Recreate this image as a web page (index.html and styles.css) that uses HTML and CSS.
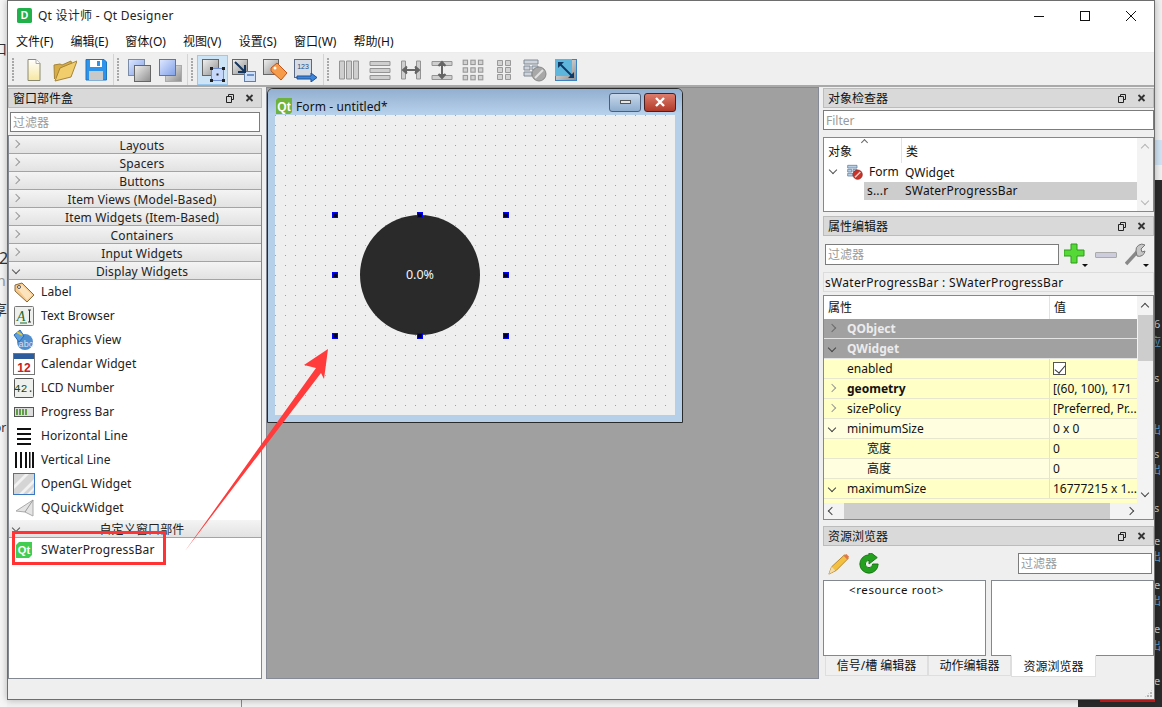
FILE: index.html
```html
<!DOCTYPE html>
<html lang="zh">
<head>
<meta charset="utf-8">
<title>Qt 设计师 - Qt Designer</title>
<link rel="stylesheet" href="styles.css">
</head>
<body>
<svg class="defs" width="0" height="0" aria-hidden="true">
  <defs>
    <linearGradient id="g" x1="0" y1="0" x2="1" y2="1"><stop offset="0" stop-color="#f2f2f2"/><stop offset="1" stop-color="#8d8d8d"/></linearGradient>
    <linearGradient id="b" x1="0" y1="0" x2="1" y2="1"><stop offset="0" stop-color="#dfe9ff"/><stop offset="1" stop-color="#7f9fe6"/></linearGradient>
    <linearGradient id="y" x1="0" y1="0" x2="0" y2="1"><stop offset="0" stop-color="#fff"/><stop offset="1" stop-color="#f6e7a0"/></linearGradient>
    <symbol id="qt" viewBox="0 0 16 16"><path d="M3 0h13v13l-3 3H0V3z" fill="#41cd52"/><text x="8" y="12" text-anchor="middle" font-family="Liberation Sans" font-size="11" font-weight="700" fill="#fff">Qt</text></symbol>
    <symbol id="qt2" viewBox="0 0 16 16"><path d="M2 0h14v14l-2 2H0V2z" fill="#6fb33e"/><text x="8" y="13" text-anchor="middle" font-family="Liberation Sans" font-size="12" font-weight="700" fill="#fff">Qt</text></symbol>
    <symbol id="dockbtns" viewBox="0 0 32 12"><path d="M2.500 4.500h5v6h-5zM4.500 4.500v-2h5v5h-2" fill="none" stroke="#222"/><path d="M22.500 3l6 6m0-6l-6 6" stroke="#333" stroke-width="1.800"/></symbol>
    <symbol id="grid3" viewBox="0 0 20 20"><g fill="#d2d2d2" stroke="#999"><rect x="1" y="1" width="4" height="4"/><rect x="8" y="1" width="4" height="4"/><rect x="15" y="1" width="4" height="4"/><rect x="1" y="8" width="4" height="4"/><rect x="8" y="8" width="4" height="4"/><rect x="15" y="8" width="4" height="4"/><rect x="1" y="15" width="4" height="4"/><rect x="8" y="15" width="4" height="4"/><rect x="15" y="15" width="4" height="4"/></g></symbol>
    <symbol id="formicon" viewBox="0 0 24 24"><path d="M1 2h14v4H1zM1 8h6v4H1zM9 8h6v4H9zM1 14h8v4H1z" fill="#cfd4da" stroke="#7f8a96"/><circle cx="16" cy="16" r="7" fill="#a8a8a8" stroke="#888"/><path d="M12 20l8-8" stroke="#e2e2e2" stroke-width="2"/></symbol>
    <symbol id="formicon-red" viewBox="0 0 24 24"><path d="M1 2h14v4H1zM1 8h6v4H1zM9 8h6v4H9zM1 14h8v4H1z" fill="#b9cfe6" stroke="#4d7199"/><circle cx="16" cy="16" r="7" fill="#c8352b" stroke="#8f1d15"/><path d="M12 20l8-8" stroke="#f2d6d2" stroke-width="2"/></symbol>
  </defs>
</svg>

<div class="desktop">
  <div class="sliver-left">
    <span class="scrap s-a">口</span>
    <span class="scrap s-b">2</span>
    <span class="scrap s-c">n</span>
    <span class="scrap s-d">享</span>
    <span class="scrap s-e">or</span>
  </div>

  <div class="center-col">
    <div class="window">
      <header class="titlebar">
        <svg class="app-logo" viewBox="0 0 16 16"><rect width="16" height="16" rx="2" fill="#21b14a"/><text x="8" y="12" text-anchor="middle" font-family="Liberation Sans" font-size="11" font-weight="700" fill="#fff">D</text></svg>
        <span class="app-title">Qt 设计师 - Qt Designer</span>
        <div class="winbtns">
          <svg class="winbtn" viewBox="0 0 46 30"><path d="M18 15.500h10" stroke="#111"/></svg>
          <svg class="winbtn" viewBox="0 0 46 30"><rect x="18.500" y="10.500" width="9" height="9" fill="none" stroke="#111"/></svg>
          <svg class="winbtn" viewBox="0 0 46 30"><path d="M18 10l10 10m0-10L18 20" stroke="#111"/></svg>
        </div>
      </header>

      <nav class="menubar">
        <span class="menu">文件(F)</span><span class="menu">编辑(E)</span><span class="menu">窗体(O)</span><span class="menu">视图(V)</span><span class="menu">设置(S)</span><span class="menu">窗口(W)</span><span class="menu">帮助(H)</span>
      </nav>

      <div class="toolbar">
        <div class="tgroup first">
          <i class="grip"></i>
          <span class="tbtn"><svg viewBox="0 0 24 24"><path d="M6 1.500h8l4 4v17H6z" fill="url(#y)" stroke="#8a8a70"/><path d="M14 1.500v4h4" fill="#fff" stroke="#aaa"/></svg></span>
          <span class="tbtn"><svg viewBox="0 0 24 24"><path d="M1.500 21L1 7l6-1 2 1 9-4 1 5" fill="#d9ad45" stroke="#a5843a"/><path d="M2 23L7 10 24 3 18 19z" fill="#f1cd6b" stroke="#a5843a"/></svg></span>
          <span class="tbtn"><svg viewBox="0 0 24 24"><path d="M2 1.500h18l2.500 2.500v18H2z" fill="#2e93ea" stroke="#1d74c2"/><rect x="6" y="2" width="12" height="7" fill="#fff"/><rect x="13" y="3" width="3" height="5" fill="#2e93ea"/><rect x="5" y="13" width="14" height="9" fill="#c9c9c9"/></svg></span>
        </div>
        <div class="tgroup">
          <i class="grip"></i>
          <span class="tbtn"><svg viewBox="0 0 24 24"><rect x="1.500" y="1.500" width="16" height="16" fill="url(#b)" stroke="#7a8ca8"/><rect x="7.500" y="7.500" width="16" height="16" fill="url(#g)" stroke="#666"/></svg></span>
          <span class="tbtn"><svg viewBox="0 0 24 24"><rect x="7.500" y="7.500" width="16" height="16" fill="url(#g)" stroke="#aaa"/><rect x="1.500" y="1.500" width="16" height="16" fill="url(#b)" stroke="#5f75a5"/></svg></span>
        </div>
        <div class="tgroup">
          <i class="grip"></i>
          <span class="tbtn active"><svg viewBox="0 0 24 24"><rect x="1.500" y="1.500" width="16" height="16" fill="url(#g)" stroke="#666"/><rect x="10.500" y="10.500" width="12" height="12" fill="#c6d8fb" stroke="#6f8fd0"/><g fill="#222"><rect x="9" y="9" width="3" height="3"/><rect x="21" y="9" width="3" height="3"/><rect x="9" y="21" width="3" height="3"/><rect x="21" y="21" width="3" height="3"/><rect x="15.500" y="15.500" width="2" height="2"/></g></svg></span>
          <span class="tbtn"><svg viewBox="0 0 24 24"><rect x="0.500" y="1.500" width="15" height="15" fill="url(#g)" stroke="#666"/><rect x="12.500" y="13.500" width="11" height="10" fill="#cfe0f7" stroke="#5f7faa"/><rect x="15" y="16" width="7" height="2" fill="#6f93c9"/><path d="M3 4l10 10m-7 0h7V7" fill="none" stroke="#14365e" stroke-width="2"/></svg></span>
          <span class="tbtn"><svg viewBox="0 0 24 24"><rect x="0.500" y="1.500" width="15" height="15" fill="url(#g)" stroke="#666"/><path d="M8 10l6-5 10 10-6 7-10-9z" fill="#f59b4a" stroke="#c0561c"/><circle cx="12" cy="10" r="1.500" fill="#fff"/></svg></span>
          <span class="tbtn"><svg viewBox="0 0 24 24"><rect x="0.500" y="1.500" width="17" height="18" fill="#d6dbe4" stroke="#5a6a86"/><text x="9" y="11" text-anchor="middle" font-family="Liberation Sans" font-size="7" fill="#274a86">123</text><path d="M3 18h14v-3l6 4.500-6 4.500v-3H3z" fill="#3c86dc" stroke="#1e4f95"/></svg></span>
        </div>
        <div class="tgroup">
          <i class="grip"></i>
          <span class="tbtn"><svg viewBox="0 0 24 24"><path d="M2.500 3h5v18h-5zM9.500 3h5v18h-5zM16.500 3h5v18h-5z" fill="#cfcfcf" stroke="#949494"/></svg></span>
          <span class="tbtn"><svg viewBox="0 0 24 24"><path d="M2 3.500h20v4H2zM2 10.500h20v4H2zM2 17.500h20v4H2z" fill="#cfcfcf" stroke="#949494"/></svg></span>
          <span class="tbtn"><svg viewBox="0 0 24 24"><path d="M2.500 3h4v18h-4zM17.500 3h4v18h-4z" fill="#cfcfcf" stroke="#949494"/><path d="M4 12h16M8 8.500L4 12l4 3.500M16 8.500l4 3.500-4 3.500" fill="#666" stroke="#666" stroke-width="2"/></svg></span>
          <span class="tbtn"><svg viewBox="0 0 24 24"><path d="M2 3.500h20v4H2zM2 17.500h20v4H2z" fill="#cfcfcf" stroke="#949494"/><path d="M12 5v15M8.500 8L12 4l3.500 4M8.500 16l3.500 4 3.500-4" fill="#666" stroke="#666" stroke-width="2"/></svg></span>
          <span class="tbtn"><svg viewBox="-1 -1 22 22"><use href="#grid3" width="20" height="20"/></svg></span>
          <span class="tbtn"><svg viewBox="0 0 24 24"><path d="M5.500 2.500h5v5h-5zM13.500 2.500h5v5h-5zM5.500 9.500h5v5h-5zM13.500 9.500h5v5h-5zM5.500 16.500h5v5h-5zM13.500 16.500h5v5h-5z" fill="#d2d2d2" stroke="#999"/></svg></span>
          <span class="tbtn"><svg viewBox="0 0 24 24"><use href="#formicon" width="24" height="24"/></svg></span>
          <span class="tbtn"><svg viewBox="0 0 24 24"><rect x="1.500" y="1.500" width="21" height="21" fill="url(#g)" stroke="#3b82c4"/><path d="M1 1h17v17H1z" fill="#5fb6dc"/><path d="M5 5l14 14" stroke="#0f3b66" stroke-width="2"/><path d="M4 10V4h6zM20 14v6h-6z" fill="#0f3b66"/></svg></span>
        </div>
      </div>

      <main class="workspace">
        <section class="dock left-dock">
          <div class="dock-title"><span>窗口部件盒</span><svg class="dock-btns" viewBox="0 0 32 12"><use href="#dockbtns"/></svg></div>
          <input class="filter left-filter" placeholder="过滤器">
          <div class="toolbox">
            <div class="cat"><i class="chev right"></i>Layouts</div>
            <div class="cat"><i class="chev right"></i>Spacers</div>
            <div class="cat"><i class="chev right"></i>Buttons</div>
            <div class="cat"><i class="chev right"></i>Item Views (Model-Based)</div>
            <div class="cat"><i class="chev right"></i>Item Widgets (Item-Based)</div>
            <div class="cat"><i class="chev right"></i>Containers</div>
            <div class="cat"><i class="chev right"></i>Input Widgets</div>
            <div class="cat"><i class="chev down"></i>Display Widgets</div>
            <div class="item">
              <svg viewBox="0 0 22 22"><path d="M2 4l7-2 12 12-7 7L2 10z" fill="#f7c98b" stroke="#8a6a3c"/><path d="M4 7l5-3 10 10-5 5z" fill="#fbe3bd"/><circle cx="6" cy="6" r="1.500" fill="#fff" stroke="#555"/></svg>Label</div>
            <div class="item">
              <svg viewBox="0 0 22 22"><rect x="1.500" y="1.500" width="19" height="19" rx="1" fill="#eef0ee" stroke="#777"/><text x="8" y="16" text-anchor="middle" font-family="Liberation Serif" font-size="14" font-style="italic" fill="#1d6d2e">A</text><path d="M7 18h7" stroke="#1d6d2e"/><path d="M15 5h3M15 17h3M16.500 5v12" stroke="#333"/></svg>Text Browser</div>
            <div class="item">
              <svg viewBox="0 0 22 22"><circle cx="12" cy="13" r="8" fill="#4f8fd0"/><path d="M1 6l6-5 4 6-5 6z" fill="#5ea0df" stroke="#2a6bb0"/><path d="M4 3l5 3" stroke="#e8c52a" stroke-width="2"/><text x="13" y="18" text-anchor="middle" font-family="Liberation Sans" font-size="9" fill="#dde">abc</text></svg>Graphics View</div>
            <div class="item">
              <svg viewBox="0 0 22 22"><rect x="0.500" y="0.500" width="21" height="21" fill="#fff" stroke="#777"/><rect x="1" y="1" width="20" height="5" fill="#2c5c9c"/><text x="11" y="18.500" text-anchor="middle" font-family="Liberation Sans" font-size="12" font-weight="700" fill="#c62222">12</text></svg>Calendar Widget</div>
            <div class="item">
              <svg viewBox="0 0 22 22"><rect x="1.500" y="1.500" width="19" height="19" rx="1" fill="#eef0ee" stroke="#555"/><text x="11" y="15" text-anchor="middle" font-family="Liberation Mono" font-size="11" fill="#0c4a18">42.</text></svg>LCD Number</div>
            <div class="item">
              <svg viewBox="0 0 22 22"><rect x="1.500" y="6.500" width="19" height="9" fill="#ddd" stroke="#555"/><path d="M3 8h2v6H3zM6 8h2v6H6zM9 8h2v6H9zM12 8h2v6h-2z" fill="#5f9e45"/></svg>Progress Bar</div>
            <div class="item">
              <svg viewBox="0 0 22 22"><path d="M4 3h14v2H4zM4 8h14v2H4zM4 13h14v2H4zM4 18h14v2H4z" fill="#111"/></svg>Horizontal Line</div>
            <div class="item">
              <svg viewBox="0 0 22 22"><path d="M2 3h2v16H2zM7 3h2v16H7zM12 3h2v16h-2zM16 3h1.500v16H16zM19 3h2v16h-2z" fill="#111"/></svg>Vertical Line</div>
            <div class="item">
              <svg viewBox="0 0 22 22"><rect x="0.500" y="0.500" width="21" height="21" fill="#d5d5d5" stroke="#3a78c4"/><path d="M1 12L12 1h4L1 16zM6 21L21 6v4L10 21zM14 21l7-7v3l-4 4z" fill="#f2f2f2"/></svg>OpenGL Widget</div>
            <div class="item">
              <svg viewBox="0 0 22 22"><path d="M3 14L20 3v16l-8-4z" fill="#e4e4e4" stroke="#aaa"/><path d="M12 15L20 3" stroke="#999"/></svg>QQuickWidget</div>
            <div class="cat"><i class="chev down"></i>自定义窗口部件</div>
            <div class="item custom"><svg viewBox="0 0 16 16"><use href="#qt"/></svg>SWaterProgressBar</div>
          </div>
        </section>

        <section class="central">
          <div class="subwindow">
            <div class="sub-title">
              <svg class="sub-logo" viewBox="0 0 16 16"><use href="#qt2"/></svg>
              <span class="sub-text">Form - untitled*</span>
              <span class="sub-min"><i></i></span>
              <span class="sub-close"><svg viewBox="0 0 12 10"><path d="M2 1l8 8m0-8L2 9" stroke="#fff" stroke-width="2.400"/></svg></span>
            </div>
            <div class="canvas">
              <div class="water">0.0%</div>
              <i class="handle hx0 hy0"></i><i class="handle hx1 hy0"></i><i class="handle hx2 hy0"></i>
              <i class="handle hx0 hy1"></i><i class="handle hx2 hy1"></i>
              <i class="handle hx0 hy2"></i><i class="handle hx1 hy2"></i><i class="handle hx2 hy2"></i>
            </div>
          </div>
        </section>

        <section class="dock right-dock">
          <div class="dock-title"><span>对象检查器</span><svg class="dock-btns" viewBox="0 0 32 12"><use href="#dockbtns"/></svg></div>
          <input class="filter r-filter" placeholder="Filter">
          <div class="tree">
            <div class="tree-main">
              <div class="tree-head"><span class="th1">对象<i class="sort"></i></span><span class="th2">类</span></div>
              <div class="tree-row">
                <i class="chev down t-chev"></i>
                <svg class="t-icon" viewBox="0 0 24 24"><use href="#formicon-red"/></svg>
                <span class="t-name">Form</span><span>QWidget</span>
              </div>
              <div class="tree-row sel"><span class="t-sel-name">s...r</span><span>SWaterProgressBar</span></div>
            </div>
            <div class="vbar short"><i class="chev up"></i><i class="chev down"></i></div>
          </div>

          <div class="dock-title t2"><span>属性编辑器</span><svg class="dock-btns" viewBox="0 0 32 12"><use href="#dockbtns"/></svg></div>
          <div class="prop-tools">
            <input class="filter p-filter" placeholder="过滤器">
            <svg class="pt-plus" viewBox="0 0 24 24"><path d="M7 1h6v6h7v6h-7v7H7v-7H0V7h7z" fill="#54d936" stroke="#2f9a1a"/><path d="M18 21h6l-3 3z" fill="#111"/></svg>
            <i class="pt-minus"></i>
            <svg class="pt-wrench" viewBox="0 0 24 24"><path d="M1 21L13 8" stroke="#888" stroke-width="3.500"/><path d="M11 8a6 6 0 0 1 9-6l-4 4 1 3 3-1a6 6 0 0 1-8 5z" fill="#c7c7c7" stroke="#777"/><path d="M18 21h6l-3 3z" fill="#111"/></svg>
          </div>
          <div class="obj-label">sWaterProgressBar : SWaterProgressBar</div>

          <div class="ptable">
            <div class="ptable-top">
              <div class="pcols">
                <div class="phead"><span class="pn">属性</span><span class="pv">值</span></div>
                <div class="grp"><i class="chev right"></i>QObject</div>
                <div class="grp"><i class="chev down dark"></i>QWidget</div>
                <div class="prow"><span class="pn">enabled</span><span class="pv"><i class="check"></i></span></div>
                <div class="prow"><span class="pn strong"><i class="chev right"></i>geometry</span><span class="pv">[(60, 100), 171</span></div>
                <div class="prow"><span class="pn"><i class="chev right"></i>sizePolicy</span><span class="pv">[Preferred, Pr...</span></div>
                <div class="prow lite"><span class="pn"><i class="chev down dark"></i>minimumSize</span><span class="pv">0 x 0</span></div>
                <div class="prow"><span class="pn sub">宽度</span><span class="pv">0</span></div>
                <div class="prow lite"><span class="pn sub">高度</span><span class="pv">0</span></div>
                <div class="prow"><span class="pn"><i class="chev down dark"></i>maximumSize</span><span class="pv">16777215 x 1...</span></div>
                <div class="prow clip"></div>
              </div>
              <div class="vbar long"><i class="chev up"></i><b class="vthumb"></b><i class="chev down"></i></div>
            </div>
            <div class="hbar"><i class="chev left"></i><b class="hthumb"></b><i class="chev right"></i></div>
          </div>

          <div class="dock-title t3"><span>资源浏览器</span><svg class="dock-btns" viewBox="0 0 32 12"><use href="#dockbtns"/></svg></div>
          <div class="res-tools">
            <svg class="res-icon" viewBox="0 0 24 24"><path d="M1 23l3-8L18 2l4 4L9 19z" fill="#f4c040" stroke="#b5802a"/><path d="M17 3l3-2 3 3-2 3z" fill="#e0764a"/><path d="M1 23l3-8 4 4z" fill="#f3dca8"/></svg>
            <svg class="res-icon" viewBox="0 0 24 24"><path d="M12 2a10 10 0 1 0 10 10h-6a4 4 0 1 1-4-4v4l9-7-9-7z" fill="#23a01e" stroke="#14730f"/></svg>
            <input class="filter res-filter" placeholder="过滤器">
          </div>
          <div class="res-panes">
            <div class="res-pane"><div class="res-root">&lt;resource root&gt;</div></div>
            <div class="res-pane"></div>
          </div>
          <div class="tabs">
            <span class="tab t-a">信号/槽 编辑器</span><span class="tab t-b">动作编辑器</span><span class="tab on">资源浏览器</span>
          </div>
        </section>
      </main>
      <footer class="statusbar"><i class="size-grip"></i></footer>
    </div>
    <div class="under"><i class="under-a"></i><i class="under-b"><b></b></i></div>
  </div>

  <div class="sliver-right">
    <div class="sr-light"><i class="sr-blue"></i></div>
    <div class="sr-dark">
      <span class="term m137">6</span>
      <span class="term tb m4">应</span>
      <span class="term m22">s</span>
      <span class="term tb m38">出</span>
      <span class="term m10">s</span>
      <span class="term tb m2">出</span>
      <span class="term m24">s</span>
      <span class="term m19">e</span>
      <span class="term tb m2">出</span>
      <span class="term m14">e</span>
      <span class="term tb m2">出</span>
      <span class="term m14">e</span>
      <span class="term tb m3">出</span>
      <span class="term m21">e</span>
    </div>
  </div>
</div>

<svg class="annot" viewBox="0 0 1162 707" aria-hidden="true">
  <rect x="13.500" y="532.500" width="151" height="31" fill="none" stroke="#ff3333" stroke-width="3"/>
  <path d="M185 551L316 368 304 365 328 349 324 379 321 373z" fill="#ff3b3b"/>
</svg>
</body>
</html>
```
FILE: styles.css
```css
* { box-sizing: border-box; }
html, body { margin: 0; padding: 0; }
body {
  position: relative;
  width: 1162px;
  height: 707px;
  overflow: hidden;
  background: #f4f4f4;
  font: 12px/1 "Noto Sans", "Noto Sans CJK SC", sans-serif;
  color: #111;
}
i { display: block; font-style: normal; }
.defs { position: absolute; }
.annot { position: absolute; left: 0; top: 0; width: 1162px; height: 707px; pointer-events: none; }

.desktop { display: flex; width: 1162px; height: 707px; }
.sliver-left { width: 7px; overflow: hidden; background: #f5f5f5; display: flex; flex-direction: column; color: #333; font-size: 14px; }
.scrap { display: block; white-space: nowrap; }
.s-a { margin: 42px 0 0 -7px; }
.s-b { margin: 194px 0 0 -1px; font-size: 16px; }
.s-c { margin: 8px 0 0 -3px; color: #999; }
.s-d { margin: 15px 0 0 -7px; }
.s-e { margin: 105px 0 0 -6px; font-size: 12px; }

.center-col { width: 1148px; display: flex; flex-direction: column; }
.window {
  width: 1148px; height: 700px;
  border: 1px solid #6e6e6e;
  background: #efefef;
  display: flex; flex-direction: column;
  box-shadow: 0 0 7px rgba(0,0,0,.28);
  position: relative;
}
.under { flex: 1; display: flex; background: #f1f1f1; }
.under-a { width: 235px; border-right: 1px solid #8a8a8a; }
.under-b { margin-left: 836px; flex: 1; background: #2a2a2a; }
.under-b b { display: block; height: 2px; margin-left: 22px; background: #d11a1a; }

.sliver-right { width: 7px; display: flex; flex-direction: column; overflow: hidden; }
.sr-light { height: 180px; background: #f0f0f0; padding-top: 140px; }
.sr-blue { height: 25px; background: #cfe3f4; }
.sr-dark { flex: 1; background: #2b2b2b; display: flex; flex-direction: column; color: #c9c9c9; font-size: 11px; }
.term { display: block; margin-left: -1px; line-height: 14px; }
.tb { color: #5d9fd0; margin-left: -5px; }
.m1 { margin-top: 1px; } .m2 { margin-top: 2px; } .m3 { margin-top: 3px; } .m4 { margin-top: 4px; }
.m10 { margin-top: 10px; } .m14 { margin-top: 14px; } .m19 { margin-top: 19px; } .m21 { margin-top: 21px; }
.m22 { margin-top: 22px; } .m24 { margin-top: 24px; } .m38 { margin-top: 38px; } .m137 { margin-top: 137px; }

/* title bar */
.titlebar { height: 30px; background: #fff; display: flex; align-items: center; padding-left: 9px; }
.app-logo { width: 15px; height: 15px; margin-top: -1px; }
.app-title { margin: -1px 0 0 6px; font-size: 12px; letter-spacing: .25px; color: #222; }
.winbtns { margin-left: auto; display: flex; }
.winbtn { width: 46px; height: 30px; display: block; }

.menubar { height: 22px; background: #fff; border-bottom: 1px solid #ececec; display: flex; padding: 1px 0 0 8px; align-items: center; }
.menu { padding-right: 8px; font-size: 12px; color: #111; margin-right: 9px; }
.menu:nth-child(4) { margin-right: 9.500px; }
.menu:nth-child(5) { margin-right: 9.500px; }

/* toolbar */
.toolbar { height: 34px; background: #efefef; border-bottom: 2px solid #a9a9a9; display: flex; align-items: flex-start; padding-top: 1px; }
.tgroup { display: flex; align-items: center; height: 31px; padding-left: 2px; border-right: 1px solid #d4d4d4; padding-right: 2px; }
.tgroup.first { padding-left: 4px; }
.tgroup:last-child { border-right: 0; }
.grip { width: 3px; height: 24px; margin-right: 3px; margin-left: 1px; background-image: radial-gradient(circle at 1px 1px, #a8a8a8 1px, transparent 1.100px); background-size: 3px 3px; }
.first .grip { margin-left: 0; }
.tbtn { width: 31px; height: 30px; display: flex; align-items: center; justify-content: center; border: 1px solid transparent; }
.tbtn svg { width: 24px; height: 24px; display: block; }
.tbtn.active { background: #cde4f7; border-color: #99c9ef; }

/* workspace */
.workspace { height: 592px; display: flex; gap: 4px; align-items: stretch; }
.dock { display: flex; flex-direction: column; padding-top: 1px; }
.left-dock { width: 254px; }
.right-dock { width: 331px; }
.dock-title { height: 20px; flex: none; background: #d9d9d9; border: 1px solid #bcbcbc; display: flex; align-items: center; padding: 1px 5px 0 4px; font-size: 12px; color: #111; justify-content: space-between; }
.dock-btns { width: 32px; height: 12px; display: block; margin-top: -1px; }
.filter { display: block; flex: none; height: 21px; border: 1px solid #7c7c7c; background: #fff; padding: 0 2px; font: 12px "Noto Sans", "Noto Sans CJK SC", sans-serif; outline: 0; border-radius: 0; }
.filter::placeholder { color: #9a9a9a; opacity: 1; }
.left-filter { width: 250px; height: 20px; margin: 4px 0 3px 2px; }

.toolbox { flex: 1; background: #fff; border: 1px solid #828790; overflow: hidden; }
.cat { position: relative; height: 18px; line-height: 19px; padding-left: 14px; text-align: center; letter-spacing: .15px; background: linear-gradient(#f4f4f4, #e2e2e2); border-bottom: 1px solid #a4a4a4; color: #222; }
.cat .chev { position: absolute; left: 4px; top: 5px; }
.item { height: 24px; display: flex; align-items: center; padding-left: 4px; color: #222; letter-spacing: .1px; }
.item svg { width: 22px; height: 22px; margin-right: 6px; flex: none; }
.item.custom { letter-spacing: .25px; }
.item.custom svg { width: 16px; height: 16px; margin: 0 9px 0 3px; }

.chev { width: 6px; height: 6px; border-right: 1.500px solid #9a9a9a; border-bottom: 1.500px solid #9a9a9a; flex: none; }
.chev.right { transform: rotate(-45deg); }
.chev.left { transform: rotate(135deg); }
.chev.down { transform: rotate(45deg); border-color: #555; }
.chev.up { transform: rotate(225deg); }
.chev.dark { border-color: #444; }

/* central */
.central { width: 553px; background: #a0a0a0; border: 1px solid #858a94; }
.subwindow { width: 416px; height: 335px; background: #b6d0ea; border: 1px solid #2a2a2a; border-radius: 6px 6px 0 0; padding: 0 7px 7px; display: flex; flex-direction: column; }
.sub-title { height: 26px; flex: none; margin: 0 -7px; padding: 0 6px 0 8px; background: linear-gradient(#93afd0, #b8d2ec); border-radius: 5px 5px 0 0; display: flex; align-items: center; }
.sub-logo { width: 16px; height: 16px; margin-top: 7px; }
.sub-text { margin: 9px 0 0 4px; font-size: 12px; letter-spacing: .1px; color: #111; }
.sub-min { margin: 0 3px 0 auto; width: 32px; height: 19px; border: 1px solid #4c5f7a; border-radius: 3px; background: linear-gradient(#c7d8ec, #8fadce); display: flex; align-items: center; justify-content: center; }
.sub-min i { width: 11px; height: 4px; background: #e6e6e6; border: 1px solid #555; }
.sub-close { width: 32px; height: 19px; border: 1px solid #4a1f1f; border-radius: 3px; background: linear-gradient(#dd7c6c, #b03a2a); display: flex; align-items: center; justify-content: center; }
.sub-close svg { width: 12px; height: 10px; display: block; }
.canvas {
  position: relative; flex: 1;
  background-color: #efefef;
  background-image: radial-gradient(circle at .5px .5px, #a0a0a0 .7px, transparent .8px);
  background-size: 10px 10px;
}
.water { position: absolute; left: 85px; top: 100px; width: 120px; height: 120px; padding-top: 1px; border-radius: 50%; background: #2a2a2a; color: #f6f6f6; font-size: 12.500px; display: flex; align-items: center; justify-content: center; }
.handle { position: absolute; width: 6px; height: 6px; background: #000030; border: 1px solid #0000ff; }
.hx0 { left: 57px; } .hx1 { left: 142px; } .hx2 { left: 228px; }
.hy0 { top: 97px; } .hy1 { top: 157px; } .hy2 { top: 218px; }

/* right dock */
.r-filter { width: 331px; height: 20px; margin: 2px 0 7px; }
.tree { height: 75px; flex: none; width: 331px; background: #fff; border: 1px solid #828790; display: flex; }
.tree-main { flex: 1; }
.tree-head { height: 25px; display: flex; }
.th1 { position: relative; width: 78px; padding: 8px 0 0 4px; border-right: 1px solid #e3e3e3; }
.th2 { padding: 8px 0 0 4px; }
.sort { position: absolute; left: 38px; top: 2px; width: 5px; height: 5px; border-left: 1px solid #666; border-top: 1px solid #666; transform: rotate(45deg); }
.tree-row { height: 19px; display: flex; align-items: center; position: relative; padding-left: 81px; }
.t-chev { position: absolute; left: 6px; top: 4px; }
.t-icon { position: absolute; left: 23px; top: 1px; width: 16px; height: 16px; }
.t-name { position: absolute; left: 45px; top: 3px; }
.tree-row.sel { margin-left: 40px; padding-left: 41px; background: #cdcdcd; height: 18px; letter-spacing: .2px; }
.t-sel-name { position: absolute; left: 3px; top: 3px; }
.vbar { width: 16px; flex: none; background: #f3f3f3; display: flex; flex-direction: column; align-items: center; justify-content: space-between; padding: 7px 0; }
.vbar .chev { border-color: #b5b5b5; }
.vbar.long .chev { border-color: #444; }
.vthumb { display: block; width: 15px; height: 46px; background: #cdcdcd; margin-top: 5px; margin-bottom: auto; }
.vbar.long .chev.up { margin-top: 1px; }

.t2 { margin-top: 4px; }
.prop-tools { display: flex; align-items: center; height: 21px; margin: 8px 0 7px; flex: none; }
.p-filter { width: 234px; margin-left: 2px; }
.pt-plus { width: 24px; height: 24px; margin-left: 5px; }
.pt-minus { width: 22px; height: 6px; margin-left: 7px; background: #ccd; border: 1px solid #aaa; border-radius: 1px; }
.pt-wrench { width: 24px; height: 24px; margin-left: 8px; }
.obj-label { height: 20px; flex: none; line-height: 19px; padding-left: 1px; background: #f0f0f0; border: 1px solid #dcdcdc; margin-bottom: 3px; letter-spacing: .3px; }

.ptable { width: 331px; height: 225px; flex: none; border: 1px solid #828790; background: #f3f3f3; display: flex; flex-direction: column; }
.ptable-top { height: 207px; display: flex; }
.pcols { flex: 1; overflow: hidden; background: #fff; }
.phead { height: 23px; display: flex; background: #fff; }
.phead .pn { padding-left: 4px; line-height: 23px; width: 226px; border-right: 1px solid #e3e3e3; }
.phead .pv { padding-left: 4px; line-height: 23px; }
.grp { height: 20px; background: #a1a1a1; border-bottom: 1px solid #e4e4e4; color: #ececec; font-weight: 700; line-height: 19px; padding-left: 23px; position: relative; }
.grp .chev { position: absolute; left: 5px; top: 6px; }
.grp .chev.right { border-color: #6a6a6a; }
.prow { height: 20px; display: flex; background: #ffffc6; border-bottom: 1px solid #e7e7cf; line-height: 19px; }
.prow.lite { background: #ffffe0; }
.prow .pn { position: relative; width: 226px; padding-left: 23px; border-right: 1px solid #e3e3cf; white-space: nowrap; }
.prow .pn .chev { position: absolute; left: 5px; top: 6px; }
.prow .pv { padding-left: 3px; flex: 1; white-space: nowrap; overflow: hidden; }
.pn.strong { font-weight: 700; }
.pn.sub { padding-left: 43px !important; }
.prow.clip { height: 5px; border: 0; }
.check { width: 13px; height: 13px; margin-top: 3px; border: 1px solid #555; background: #fff; position: relative; }
.check::after { content: ""; position: absolute; left: 3px; top: 0; width: 5px; height: 9px; border-right: 1px solid #333; border-bottom: 1px solid #333; transform: rotate(40deg); }
.hbar { flex: 1; display: flex; align-items: center; padding-left: 5px; background: #f3f3f3; }
.hbar .chev { border-color: #444; }
.hthumb { display: block; width: 266px; height: 16px; margin: 0 17px 0 9px; background: #cdcdcd; }

.t3 { margin-top: 6px; }
.res-tools { display: flex; align-items: center; height: 21px; margin: 7px 0 6px; flex: none; }
.res-icon { width: 22px; height: 22px; margin-left: 5px; }
.res-icon + .res-icon { margin-left: 8px; }
.res-filter { width: 134px; margin-left: auto; margin-right: 2px; }
.res-panes { height: 76px; flex: none; display: flex; gap: 5px; }
.res-pane { width: 163px; background: #fff; border: 1px solid #828790; }
.res-root { padding: 3px 0 0 25px; font-size: 11.500px; letter-spacing: .6px; }
.tabs { display: flex; padding-left: 2px; flex: none; height: 21px; }
.tab { height: 20px; background: #f0f0f0; border: 1px solid #dedede; border-top: 0; text-align: center; line-height: 19px; color: #111; }
.t-a { width: 103px; }
.t-b { width: 83px; }
.tab.on { width: 85px; height: 22px; background: #fff; margin-top: -1px; border-top: 1px solid #fff; line-height: 21px; }

.statusbar { flex: 1; position: relative; background: #efefef; }
.size-grip { position: absolute; right: 1px; bottom: 1px; width: 9px; height: 9px; background-image: radial-gradient(circle at 1px 1px, #b5b5b5 1px, transparent 1.100px); background-size: 3px 3px; clip-path: polygon(100% 0, 100% 100%, 0 100%); }
```
